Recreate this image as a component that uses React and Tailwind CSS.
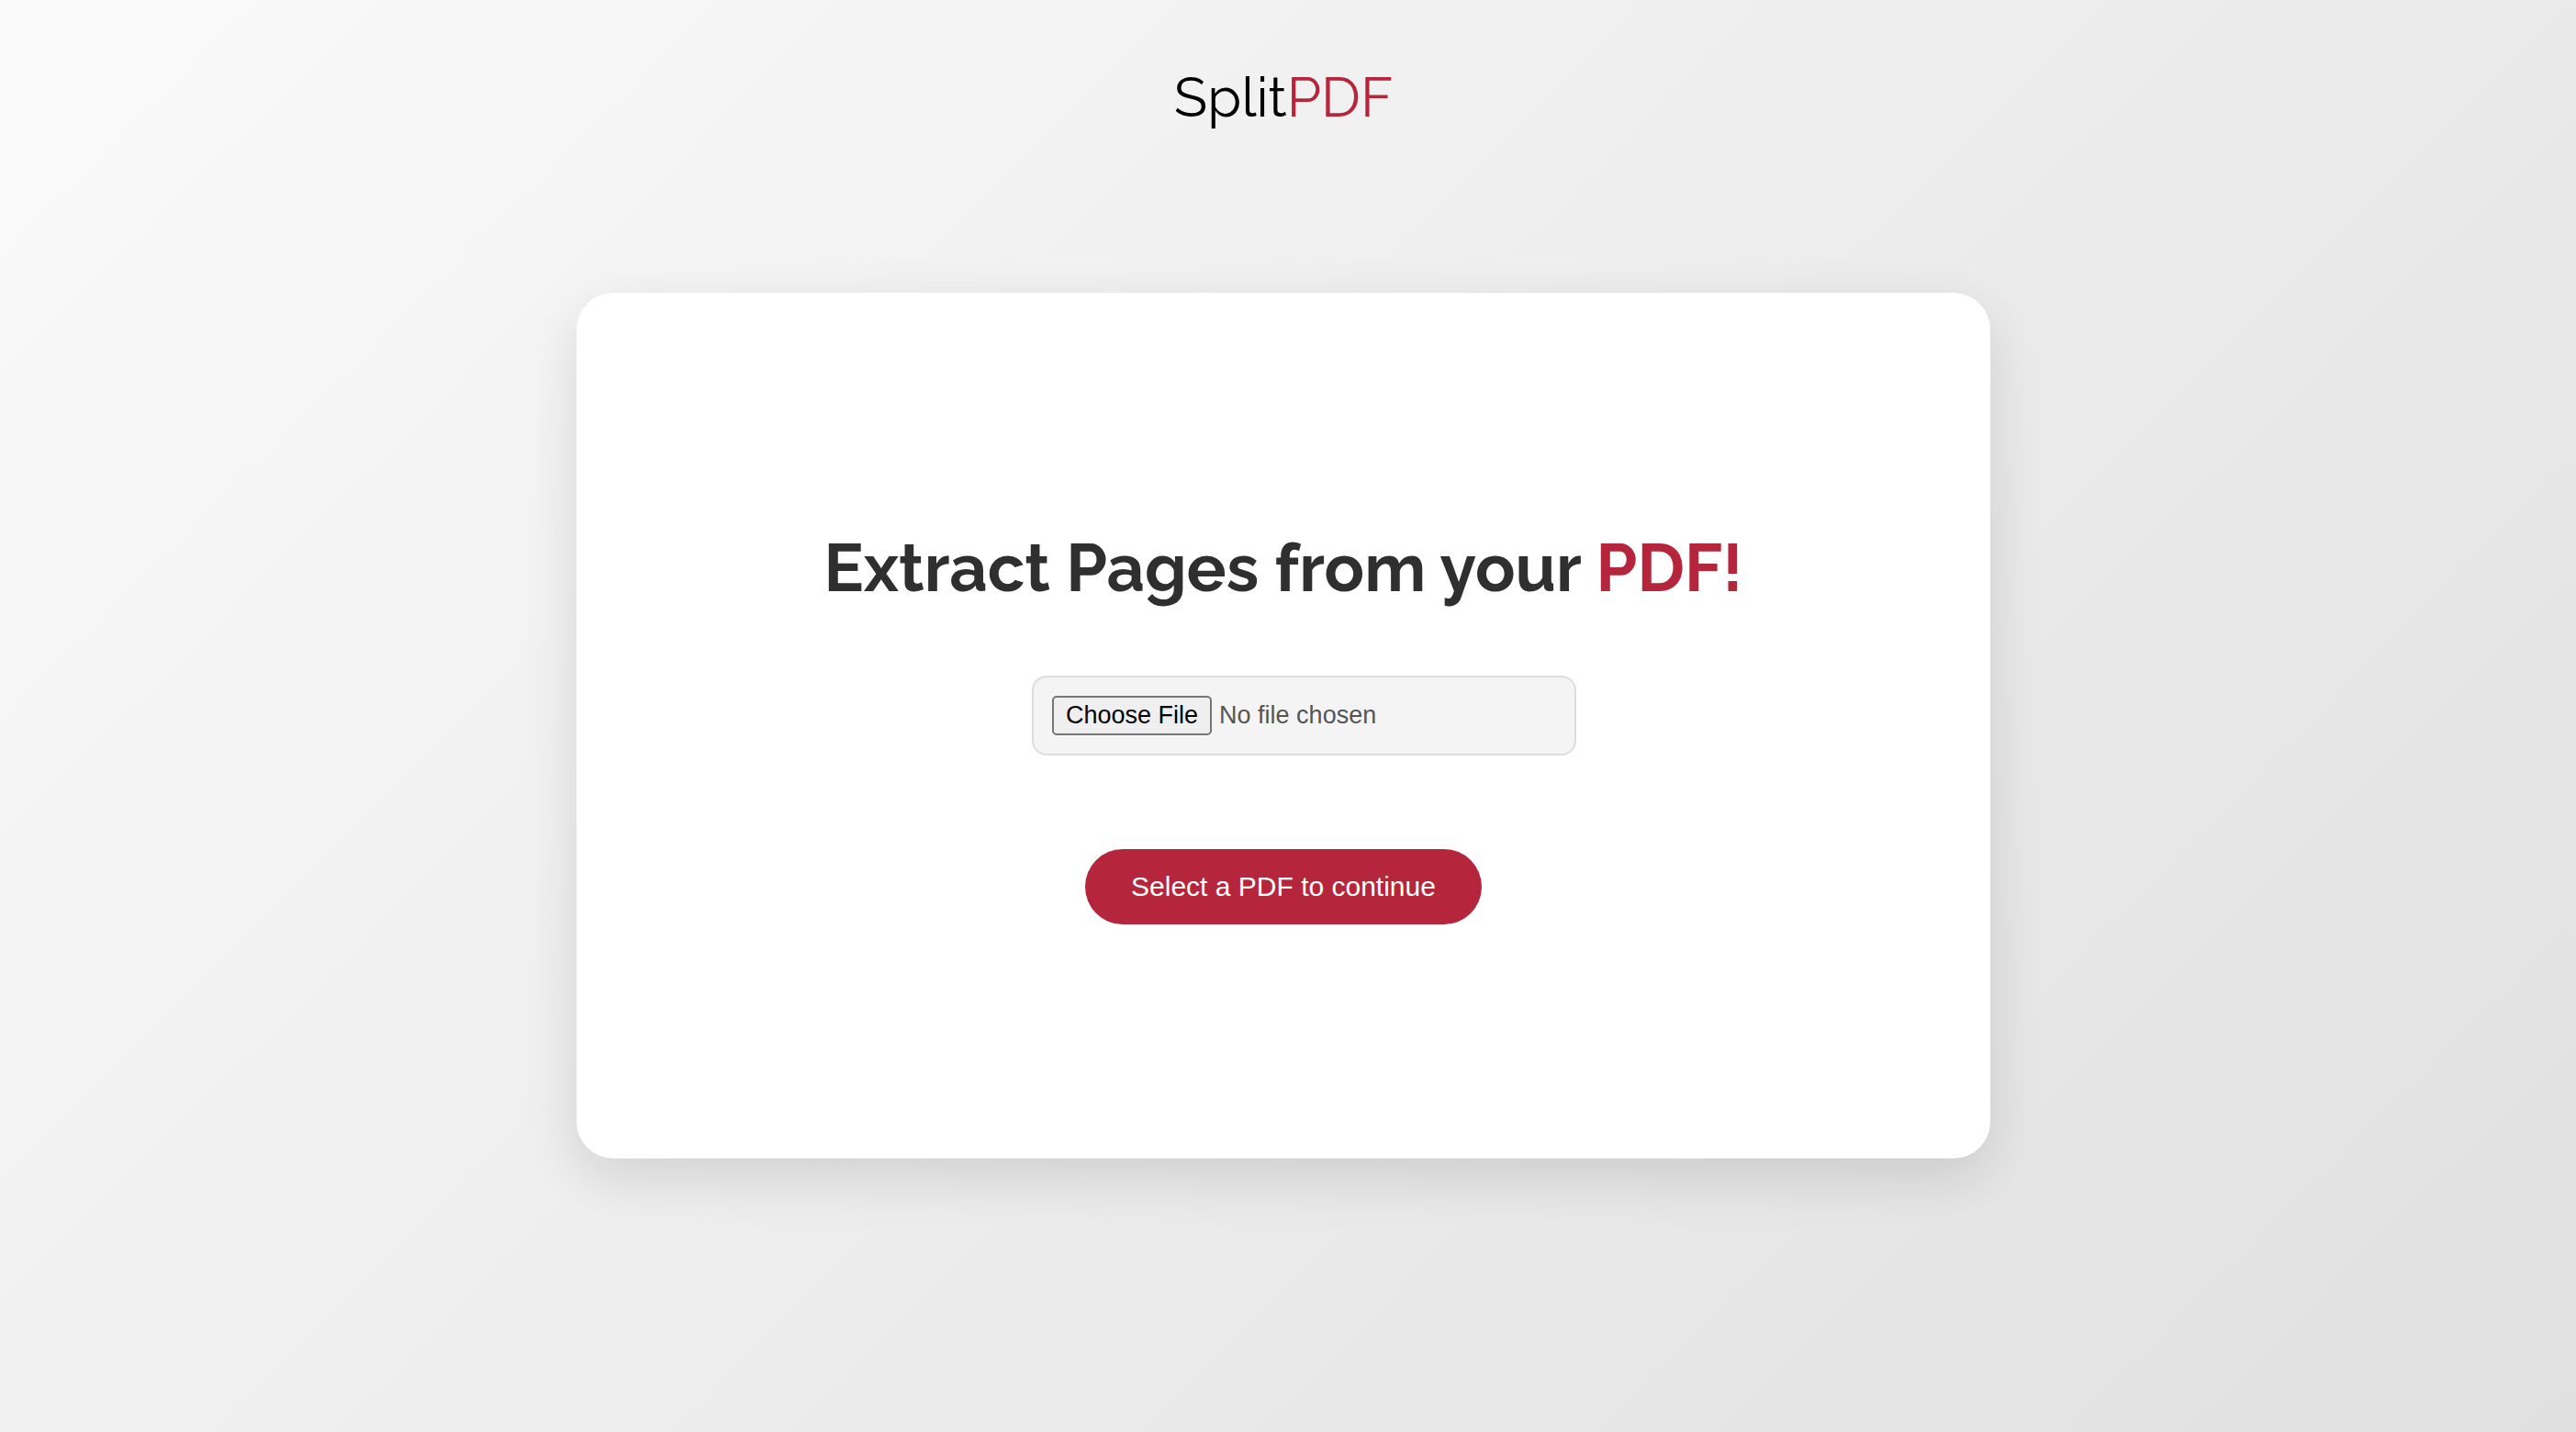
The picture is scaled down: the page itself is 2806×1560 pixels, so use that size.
export default function App() {
  return (
    <div className="flex min-h-screen flex-col items-center bg-[linear-gradient(135deg,#fafafa,#e0e0e0)] pt-[71px] pr-[10px] pb-20">
      <header className="font-[Raleway,Lato,sans-serif] text-[60px] leading-[70px] text-black">
        Split<span className="text-[#b5263c]">PDF</span>
      </header>

      <main className="mt-[178px] flex w-full max-w-[1540px] flex-col items-center rounded-[40px] bg-white px-10 py-[255px] shadow-[0_20px_60px_rgba(0,0,0,0.12)]">
        <h1 className="text-center font-[Raleway,Lato,sans-serif] text-[72px] leading-[90px] font-bold text-[#2f2f2f]">
          Extract Pages from your <span className="text-[#b5263c]">PDF!</span>
        </h1>

        <form className="flex flex-col items-center" onSubmit={(e) => e.preventDefault()}>
          <input
            type="file"
            accept="application/pdf"
            aria-label="PDF file"
            className="mt-[72px] ml-[45px] h-[87px] w-[593px] rounded-2xl border-2 border-[#dddddd] bg-[#f4f4f4] p-5 font-['Liberation_Sans',Arial,sans-serif] text-[27px] leading-[31px] text-[#555555] file:mr-2 file:h-[43px] file:rounded-[5px] file:border-2 file:border-solid file:border-[#767676] file:bg-[#efefef] file:px-[13px] file:text-black"
          />
          <button
            type="submit"
            className="mt-[102px] rounded-full bg-[#b5263c] px-[50px] py-6 font-['Liberation_Sans',Arial,sans-serif] text-[30px] leading-[34px] text-white"
          >
            Select a PDF to continue
          </button>
        </form>
      </main>
    </div>
  );
}
